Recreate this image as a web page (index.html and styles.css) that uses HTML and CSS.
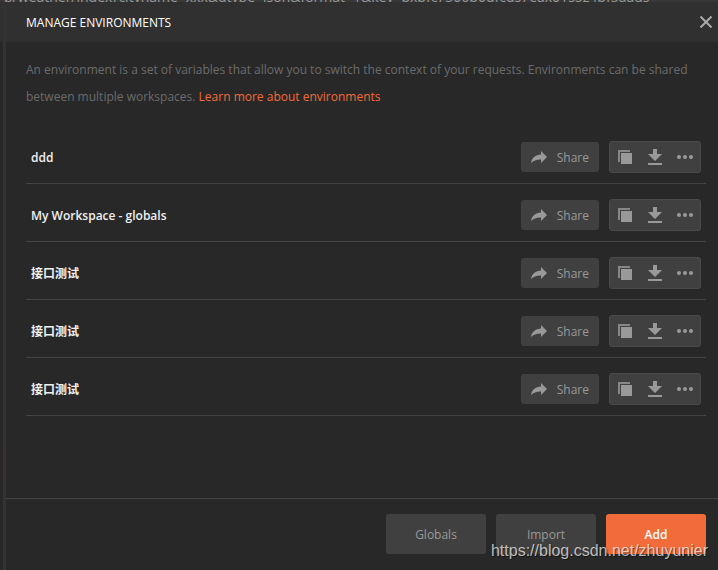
FILE: index.html
```html
<!DOCTYPE html>
<html lang="en">
<head>
  <meta charset="utf-8">
  <title>Manage Environments</title>
  <meta name="viewport" content="width=device-width, initial-scale=1">
  <link rel="stylesheet" href="styles.css">
</head>

<body>

  <svg class="sprite" aria-hidden="true">
    <symbol id="icon-share" viewBox="0 0 16 14">
      <path d="M10 1l6 6-6 6V9.500C6 9.300 2.500 10.500 0 13 .6 8 4.500 4.800 10 4.500z"/>
    </symbol>
    <symbol id="icon-copy" viewBox="0 0 14 14">
      <path d="M0 0h12v2H2v10H0z" opacity=".8"/>
      <path d="M3 3h11v11H3z"/>
    </symbol>
    <symbol id="icon-download" viewBox="0 0 14 16">
      <path d="M5 0h4v5h5L7 12 0 5h5z"/>
      <path d="M0 14h14v2H0z"/>
    </symbol>
    <symbol id="icon-more" viewBox="0 0 16 4">
      <circle cx="2" cy="2" r="2"/>
      <circle cx="8" cy="2" r="2"/>
      <circle cx="14" cy="2" r="2"/>
    </symbol>
  </svg>

  <div class="backdrop-url">p/weather/index?cityname=xxx&amp;dtype=json&amp;format=1&amp;key=bxbfc7506b0dfcds7eax01s5z4bf5aaus</div>

  <div class="workspace">
    <div class="gutter"></div>

    <main class="modal">
      <header class="modal-header">
        <h1>MANAGE ENVIRONMENTS</h1>
        <button class="close" aria-label="Close">
          <svg viewBox="0 0 12 12"><path d="M.5.5l11 11M11.500.5l-11 11"/></svg>
        </button>
      </header>

      <section class="modal-body">
        <p class="intro">An environment is a set of variables that allow you to switch the context of your requests. Environments can be shared between multiple workspaces. <a href="#">Learn more about environments</a></p>
        <ul class="environments" id="environments"></ul>
      </section>

      <footer class="modal-footer">
        <button class="btn">Globals</button>
        <button class="btn">Import</button>
        <button class="btn btn-primary">Add</button>
      </footer>
    </main>
  </div>

  <div class="watermark">https://blog.csdn.net/zhuyunier</div>

  <script src="script.js"></script>
</body>

</html>
```

FILE: styles.css
```css
* {
  box-sizing: border-box;
}

body {
  display: flex;
  flex-direction: column;
  min-height: 100vh;
  margin: 0;
  background: #282828;
  color: #999;
  font-family: "Open Sans", "Noto Sans CJK SC", sans-serif;
  font-size: 12px;
}

button {
  border: 0;
  padding: 0;
  background: none;
  color: inherit;
  font: inherit;
  cursor: pointer;
}

.sprite {
  display: none;
}

/* request url that shows above the modal */
.backdrop-url {
  display: flex;
  align-items: flex-end;
  height: 2px;
  padding-left: 4px;
  overflow: hidden;
  background: #383838;
  color: #999;
  font-size: 14px;
  line-height: 10px;
  white-space: nowrap;
}

.workspace {
  display: flex;
  flex: 1;
}

/* sliver of the window behind the modal */
.gutter {
  width: 6px;
  padding-left: 3px;
  background: linear-gradient(#303030 39px, #282828 39px);
}

.gutter::before {
  content: "";
  display: block;
  height: 100%;
  background: linear-gradient(#333 446px, #3d2f2d 446px 481px, #333 481px);
}

.modal {
  display: flex;
  flex: 1;
  flex-direction: column;
}

.modal-header {
  display: flex;
  align-items: center;
  justify-content: space-between;
  height: 40px;
  padding: 0 6px 0 20px;
  background: #303030;
}

h1 {
  margin: 0;
  color: #fff;
  font-size: 12px;
  font-weight: 400;
}

.close svg {
  display: block;
  width: 12px;
  height: 12px;
  stroke: #aaa;
  stroke-width: 2;
}

.modal-body {
  flex: 1;
  padding: 14px 12px 0 20px;
}

.intro {
  margin: 0 0 16px;
  color: #6b6b6b;
  line-height: 27px;
}

.intro a {
  color: #f26b3a;
  text-decoration: none;
}

.environments {
  margin: 0;
  padding: 0;
  list-style: none;
}

.environment {
  display: flex;
  align-items: center;
  height: 58px;
  padding: 5px 5px 0;
  border-bottom: 1px solid #444;
}

.name {
  flex: 1;
  color: #f0f0f0;
  font-weight: 600;
}

.name:lang(zh) {
  font-weight: 700;
}

.share {
  display: flex;
  align-items: center;
  gap: 10px;
  height: 30px;
  margin-right: 10px;
  padding: 0 10px;
  border-radius: 3px;
  background: #404040;
}

.share svg {
  width: 16px;
  height: 14px;
}

.environment svg {
  fill: #999;
}

.actions {
  display: flex;
  align-items: center;
  height: 32px;
  border: 1px solid #4a4a4a;
  border-radius: 3px;
  background: #404040;
}

.actions button {
  display: flex;
  align-items: center;
  justify-content: center;
  width: 30px;
  height: 30px;
}

.actions svg {
  width: 16px;
  height: 14px;
}

.actions .icon-download {
  height: 16px;
}

.actions .icon-more {
  height: 4px;
}

.modal-footer {
  display: flex;
  justify-content: flex-end;
  gap: 10px;
  padding: 15px 12px 16px;
  border-top: 1px solid #444;
}

.btn {
  width: 100px;
  height: 40px;
  border-radius: 3px;
  background: #404040;
}

.btn-primary {
  background: #f26b3a;
  color: #fff;
  font-weight: 600;
}

.watermark {
  position: absolute;
  right: 10px;
  bottom: 9px;
  color: rgba(255, 255, 255, 0.7);
  font-family: "Liberation Sans", sans-serif;
  font-size: 16px;
  line-height: 20px;
  text-shadow: 1px 1px 1px rgba(0, 0, 0, 0.5);
  pointer-events: none;
}
```

FILE: script.js
```js
const environments = [
  { name: "ddd", lang: "en" },
  { name: "My Workspace - globals", lang: "en" },
  { name: "接口测试", lang: "zh" },
  { name: "接口测试", lang: "zh" },
  { name: "接口测试", lang: "zh" }
];

function icon(name) {
  return `<svg class="icon-${name}" aria-hidden="true"><use href="#icon-${name}"></use></svg>`;
}

document.getElementById("environments").innerHTML = environments.map(({ name, lang }) => `
  <li class="environment">
    <span class="name" lang="${lang}">${name}</span>
    <button class="share">${icon("share")}Share</button>
    <div class="actions">
      <button aria-label="Duplicate">${icon("copy")}</button>
      <button aria-label="Download">${icon("download")}</button>
      <button aria-label="More">${icon("more")}</button>
    </div>
  </li>`).join("");
```
